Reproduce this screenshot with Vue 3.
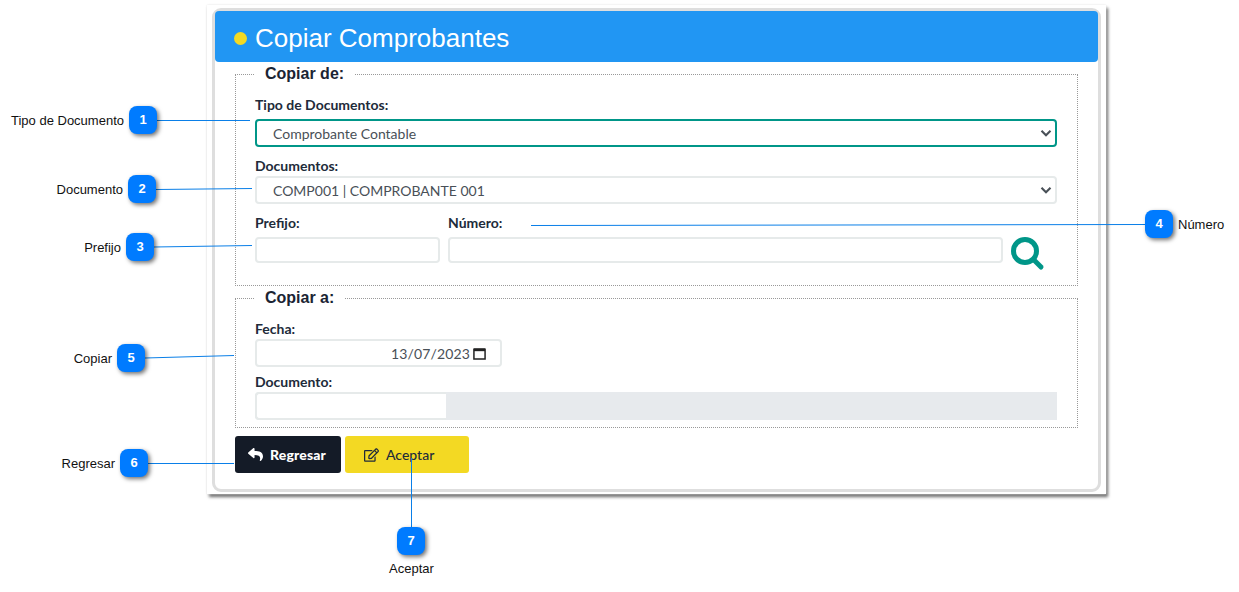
<template>
  <div class="page">
    <div class="shell">
      <div class="card">
        <header class="title-bar">
          <span class="dot"></span>
          <h1>Copiar Comprobantes</h1>
        </header>

        <div class="card-body">
          <fieldset class="group group-from">
            <legend>Copiar de:</legend>

            <label class="field-label first">Tipo de Documentos:</label>
            <div class="select-wrap">
              <select class="control select focused">
                <option>Comprobante Contable</option>
              </select>
              <svg class="chevron" viewBox="0 0 16 16"><path d="M2 5l6 6 6-6" /></svg>
            </div>

            <label class="field-label docs-label">Documentos:</label>
            <div class="select-wrap">
              <select class="control select">
                <option>COMP001 | COMPROBANTE 001</option>
              </select>
              <svg class="chevron" viewBox="0 0 16 16"><path d="M2 5l6 6 6-6" /></svg>
            </div>

            <div class="number-row">
              <div>
                <label class="field-label">Prefijo:</label>
                <input class="control short" type="text" />
              </div>
              <div>
                <label class="field-label">Número:</label>
                <input class="control short" type="text" />
              </div>
              <svg class="search" viewBox="0 0 34 34">
                <circle cx="14" cy="14" r="11.5" />
                <path d="M23 23l7 7" />
              </svg>
            </div>
          </fieldset>

          <fieldset class="group group-to">
            <legend>Copiar a:</legend>

            <label class="field-label first date-label">Fecha:</label>
            <div class="control date">
              <span>13/07/2023</span>
              <svg viewBox="0 0 14 14"><path class="cal-top" d="M1 1.5h12v3H1z" /><path d="M1 2.5h12v10.5H1z" /></svg>
            </div>

            <label class="field-label doc-label">Documento:</label>
            <div class="doc-row">
              <input class="doc-input" type="text" />
            </div>
          </fieldset>

          <div class="actions">
            <button class="btn btn-dark">
              <svg viewBox="0 0 512 512"><path d="M8.309 189.836L184.313 37.851C199.719 24.546 224 35.347 224 56.015v80.053c160.629 1.839 288 34.032 288 186.258 0 61.441-39.581 122.309-83.333 154.132-13.653 9.931-33.111-2.533-28.077-18.631 45.344-145.012-21.507-183.51-176.59-185.742V360c0 20.7-24.3 31.453-39.687 18.164l-176.004-152c-11.071-9.562-11.086-26.753 0-36.328z" /></svg>
              Regresar
            </button>
            <button class="btn btn-yellow">
              <svg viewBox="0 0 576 512"><path d="M402.3 344.9l32-32c5-5 13.7-1.5 13.7 5.7V464c0 26.5-21.5 48-48 48H48c-26.5 0-48-21.5-48-48V112c0-26.5 21.5-48 48-48h273.5c7.1 0 10.7 8.6 5.7 13.7l-32 32c-1.5 1.5-3.5 2.3-5.7 2.3H48v352h352V350.5c0-2.1.8-4.1 2.3-5.6zm156.6-201.8L296.3 405.7l-90.4 10c-26.2 2.9-48.5-19.2-45.6-45.6l10-90.4L432.9 17.1c22.9-22.9 59.9-22.9 82.7 0l43.2 43.2c22.9 22.9 22.9 60 .1 82.8zM460.1 174L402 115.9 216.2 301.8l-7.3 65.3 65.3-7.3L460.1 174zm64.8-79.7l-43.2-43.2c-4.1-4.1-10.8-4.1-14.8 0L436 82l58.1 58.1 30.9-30.9c4-4.2 4-10.8-.1-14.9z" /></svg>
              Aceptar
            </button>
          </div>
        </div>
      </div>
    </div>

    <!-- llamadas sobre la captura -->
    <svg class="lines" width="1239" height="592">
      <line v-for="c in callouts" :key="c.n" :x1="c.line[0]" :y1="c.line[1]" :x2="c.line[2]" :y2="c.line[3]" />
    </svg>
    <template v-for="c in callouts" :key="c.n">
      <div class="badge" :style="{ left: c.x + 'px', top: c.y + 'px' }">{{ c.n }}</div>
      <div class="callout-text" :style="c.textStyle">{{ c.text }}</div>
    </template>
  </div>
</template>

<script setup>
const callouts = [
  { n: 1, x: 129, y: 106, text: 'Tipo de Documento', line: [157, 120.5, 250, 120.5], textStyle: { right: '1115px', top: '113px' } },
  { n: 2, x: 128, y: 175, text: 'Documento', line: [156, 189.5, 252, 188.5], textStyle: { right: '1116px', top: '182px' } },
  { n: 3, x: 126, y: 233, text: 'Prefijo', line: [154, 247, 252, 245.5], textStyle: { right: '1118px', top: '240px' } },
  { n: 4, x: 1145, y: 210, text: 'Número', line: [531, 225.5, 1145, 224.5], textStyle: { left: '1178px', top: '217px' } },
  { n: 5, x: 117, y: 344, text: 'Copiar', line: [145, 358, 234, 355.5], textStyle: { right: '1127px', top: '351px' } },
  { n: 6, x: 120, y: 449, text: 'Regresar', line: [148, 463.5, 234, 463.5], textStyle: { right: '1124px', top: '456px' } },
  { n: 7, x: 397, y: 527, text: 'Aceptar', line: [411.5, 527, 411.5, 458], textStyle: { left: '389px', top: '561px' } }
]
</script>

<style>
html,
body {
  margin: 0;
  background: #fff;
  overflow: hidden;
}
</style>

<style scoped>
.page {
  position: relative;
  width: 1239px;
  height: 592px;
  padding: 5px 0 0 207px;
  box-sizing: border-box;
  font-family: Lato, "Liberation Sans", sans-serif;
  overflow: hidden;
}

.shell {
  width: 899px;
  height: 489px;
  box-sizing: border-box;
  padding: 3px 5px 2px 5px;
  background: #fff;
  box-shadow: 0 0 2px #e4e4e4, 2px 3px 3px #6a6a6a;
}

.card {
  height: 100%;
  box-sizing: border-box;
  border: 3px solid #dedede;
  border-radius: 9px;
}

.title-bar {
  display: flex;
  align-items: center;
  height: 51px;
  box-sizing: border-box;
  padding: 3px 0 0 19px;
  background: #2196f3;
  border-radius: 4px;
  color: #fff;
}

.dot {
  width: 13px;
  height: 13px;
  margin-right: 8px;
  border-radius: 50%;
  background: #f3d923;
}

h1 {
  margin: 0;
  font: 400 26px/1 "Liberation Sans", Arial, sans-serif;
}

.card-body {
  padding: 0 20px;
}

.group {
  margin: 0;
  padding: 0 20px 0 19px;
  border: 1px dotted #999;
  min-width: 0;
  box-sizing: border-box;
}

.group legend {
  margin-left: 0;
  padding: 0 10px;
  font: 700 16px/18px "Liberation Sans", Arial, sans-serif;
  color: #1b2433;
}

.group-from {
  height: 221px;
  margin-top: 3px;
}

.group-to {
  height: 139px;
  margin-top: 3px;
}

.field-label {
  display: block;
  margin: 0 0 2px;
  padding-top: 11px;
  font-size: 14px;
  line-height: 17px;
  font-weight: 700;
  color: #212b3a;
}

.field-label.first {
  padding-top: 13px;
  margin-bottom: 6px;
}

.field-label.docs-label {
  padding-top: 10px;
}

.field-label.date-label {
  margin-bottom: 2px;
}

.field-label.doc-label {
  padding-top: 6px;
  margin-bottom: 2px;
}

.control {
  display: block;
  width: 100%;
  height: 28px;
  box-sizing: border-box;
  border: 2px solid #e6eaea;
  border-radius: 4px;
  background: #fff;
  outline: none;
  font-family: inherit;
  font-size: 14px;
  color: #495057;
}

.select-wrap {
  position: relative;
}

.select {
  appearance: none;
  padding: 0 16px;
}

.select.focused {
  border-color: #009688;
}

.chevron {
  position: absolute;
  top: 8px;
  right: 5px;
  width: 12px;
  height: 12px;
  fill: none;
  stroke: #495057;
  stroke-width: 2.8;
}

.number-row {
  display: grid;
  grid-template-columns: 185px 555px 34px;
  column-gap: 8px;
}

.number-row .field-label {
  padding-top: 10px;
  margin-bottom: 6px;
}

.control.short {
  height: 26px;
}

.search {
  width: 34px;
  height: 34px;
  margin-top: 33px;
  fill: none;
  stroke: #009688;
  stroke-width: 5;
  stroke-linecap: round;
}

.date {
  display: flex;
  align-items: center;
  justify-content: flex-end;
  width: 247px;
  padding-right: 14px;
  letter-spacing: 0.15px;
}

.date svg {
  width: 13px;
  height: 13px;
  margin-left: 3px;
  fill: none;
  stroke: #222;
  stroke-width: 1.6;
}

.date svg .cal-top {
  fill: #222;
  stroke: none;
}

.doc-row {
  height: 28px;
  background: #e7eaed;
  border-radius: 4px 0 0 4px;
}

.doc-input {
  display: block;
  width: 191px;
  height: 100%;
  box-sizing: border-box;
  border: 2px solid #e6eaea;
  border-right: 0;
  border-radius: 4px 0 0 4px;
  background: #fff;
  outline: none;
}

.actions {
  display: flex;
  gap: 4px;
  margin-top: 8px;
}

.btn {
  display: flex;
  align-items: center;
  height: 37px;
  box-sizing: border-box;
  border: 0;
  border-radius: 3px;
  font-family: inherit;
  font-size: 14px;
}

.btn-dark {
  width: 106px;
  padding-left: 13px;
  background: #141b27;
  color: #fff;
  font-weight: 900;
  letter-spacing: 0.15px;
}

.btn-dark svg {
  width: 15px;
  height: 15px;
  margin-right: 7px;
  fill: #fff;
}

.btn-yellow {
  width: 124px;
  padding-left: 19px;
  background: #f3d923;
  color: #212b3a;
  font-weight: 500;
}

.btn-yellow svg {
  width: 15px;
  height: 14px;
  margin-right: 7px;
  fill: #212b3a;
}

.lines {
  position: absolute;
  left: 0;
  top: 0;
  pointer-events: none;
}

.lines line {
  stroke: #0a7fe8;
  stroke-width: 1;
}

.badge {
  position: absolute;
  width: 28px;
  height: 28px;
  border-radius: 8px;
  background: #007bff;
  box-shadow: 2px 2px 4px rgba(0, 0, 0, 0.55);
  color: #fff;
  font: 700 13px/28px "Liberation Sans", Arial, sans-serif;
  text-align: center;
}

.callout-text {
  position: absolute;
  font: 400 13px/16px "Liberation Sans", Arial, sans-serif;
  color: #111;
  white-space: nowrap;
}
</style>
